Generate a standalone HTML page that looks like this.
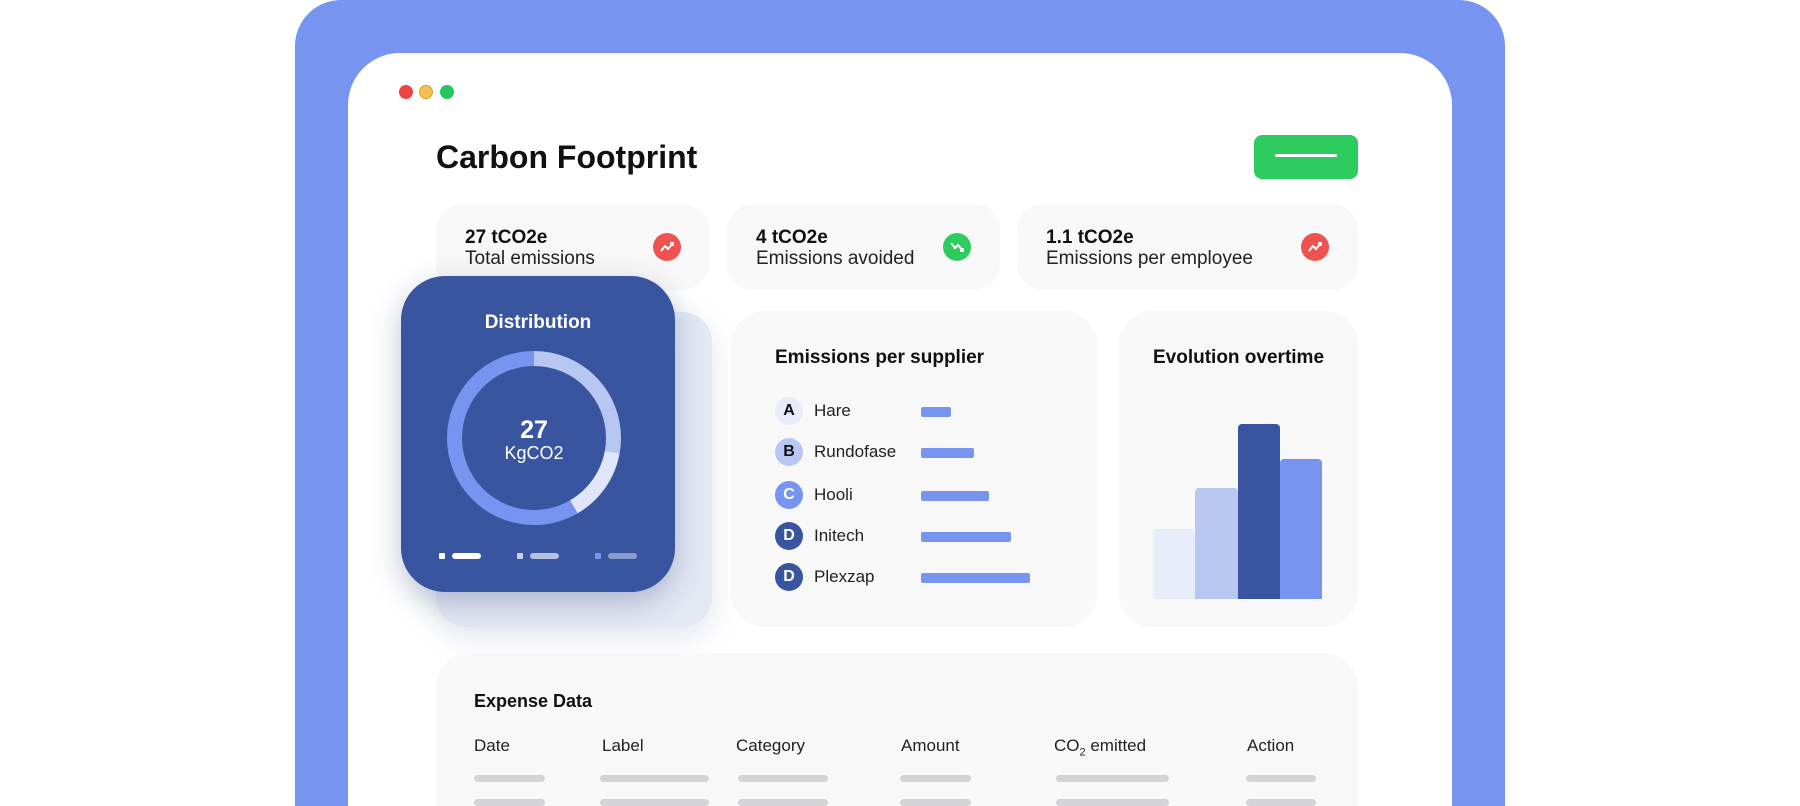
<!DOCTYPE html>
<html><head><meta charset="utf-8"><style>
*{margin:0;padding:0;box-sizing:border-box}
html,body{width:1800px;height:806px;overflow:hidden}
body{background:#fff;font-family:"Liberation Sans",sans-serif;color:#111}
#w{position:relative;width:1800px;height:806px;overflow:hidden}
.a{position:absolute}
.card{position:absolute;background:#f8f8f8;border-radius:26px}
.v{font-weight:bold;font-size:19px}
.l{font-size:19px;color:#222}
.av{position:absolute;width:28px;height:28px;border-radius:50%;font-weight:bold;font-size:16px;text-align:center;line-height:28px}
.nm{position:absolute;font-size:17px;color:#222}
.bar{position:absolute;height:10px;background:#7795F0;border-radius:2px}
.h{position:absolute;font-size:17px;color:#222;top:736px}
.g{position:absolute;height:7px;background:#d4d4d6;border-radius:4px}
</style></head><body><div id="w">
<div class="a" style="left:295px;top:0;width:1210px;height:806px;background:#7795F0;border-radius:46px 46px 0 0"></div>
<div class="a" style="left:348px;top:53px;width:1104px;height:753px;background:#fff;border-radius:52px 52px 0 0"></div>
<div class="a" style="left:399px;top:85px;width:14px;height:14px;border-radius:50%;background:#ef4444"></div>
<div class="a" style="left:419px;top:85px;width:14px;height:14px;border-radius:50%;background:#f4c14f;border:1px solid #d9a030"></div>
<div class="a" style="left:440px;top:85px;width:14px;height:14px;border-radius:50%;background:#22c55e"></div>
<div class="a" style="left:436px;top:139px;font-size:32px;font-weight:bold">Carbon Footprint</div>
<div class="a" style="left:1254px;top:135px;width:104px;height:44px;background:#2ECC5F;border-radius:8px"></div>
<div class="a" style="left:1275px;top:154px;width:62px;height:3px;background:#fff;border-radius:2px"></div>

<div class="card" style="left:436px;top:204px;width:273px;height:86px"></div>
<div class="card" style="left:727px;top:204px;width:273px;height:86px"></div>
<div class="card" style="left:1017px;top:204px;width:341px;height:86px"></div>
<div class="a v" style="left:465px;top:227px">27 tCO2e</div><div class="a l" style="left:465px;top:248px">Total emissions</div>
<div class="a v" style="left:756px;top:227px">4 tCO2e</div><div class="a l" style="left:756px;top:248px">Emissions avoided</div>
<div class="a v" style="left:1046px;top:227px">1.1 tCO2e</div><div class="a l" style="left:1046px;top:248px">Emissions per employee</div>
<svg class="a" style="left:653px;top:233px" width="28" height="28"><circle cx="14" cy="14" r="14" fill="#f05252"/><path d="M8 18l4-5 3 3 5-6m-3 0h3v3" stroke="#fff" stroke-width="2" fill="none"/></svg>
<svg class="a" style="left:943px;top:233px" width="28" height="28"><circle cx="14" cy="14" r="14" fill="#2ECC5F"/><path d="M8 10l4 5 3-3 5 6m-3 0h3v-3" stroke="#fff" stroke-width="2" fill="none"/></svg>
<svg class="a" style="left:1301px;top:233px" width="28" height="28"><circle cx="14" cy="14" r="14" fill="#f05252"/><path d="M8 18l4-5 3 3 5-6m-3 0h3v3" stroke="#fff" stroke-width="2" fill="none"/></svg>

<div class="a" style="left:436px;top:312px;width:276px;height:315px;background:#e4e8f3;border-radius:30px;box-shadow:0 10px 30px rgba(60,80,140,.15)"></div>
<div class="a" style="left:401px;top:276px;width:274px;height:316px;background:#3A55A0;border-radius:44px;box-shadow:0 10px 30px rgba(40,60,120,.3)"></div>
<div class="a" style="left:401px;top:312px;width:274px;text-align:center;color:#fff;font-weight:bold;font-size:19px">Distribution</div>
<svg class="a" style="left:446px;top:350px" width="176" height="176"><g transform="rotate(-90 88 88)">
<circle cx="88" cy="88" r="79.5" fill="none" stroke="#B8C7F2" stroke-width="15" stroke-dasharray="139 500"/>
<circle cx="88" cy="88" r="79.5" fill="none" stroke="#E0E6F9" stroke-width="15" stroke-dasharray="69 500" stroke-dashoffset="-139"/>
<circle cx="88" cy="88" r="79.5" fill="none" stroke="#7795F0" stroke-width="15" stroke-dasharray="292 500" stroke-dashoffset="-208"/></g></svg>
<div class="a" style="left:434px;top:416px;width:200px;text-align:center;color:#fff;font-weight:bold;font-size:25px">27</div>
<div class="a" style="left:434px;top:443px;width:200px;text-align:center;color:#fff;font-size:18px">KgCO2</div>
<div class="a" style="left:439px;top:553px;width:6px;height:6px;background:#fff;border-radius:1px"></div>
<div class="a" style="left:452px;top:553px;width:29px;height:6px;background:#fff;border-radius:3px"></div>
<div class="a" style="left:517px;top:553px;width:6px;height:6px;background:#c8d2ee;border-radius:1px"></div>
<div class="a" style="left:530px;top:553px;width:29px;height:6px;background:#b6c1e0;border-radius:3px"></div>
<div class="a" style="left:595px;top:553px;width:6px;height:6px;background:#7795F0;border-radius:1px"></div>
<div class="a" style="left:608px;top:553px;width:29px;height:6px;background:#8a9ccc;border-radius:3px"></div>

<div class="card" style="left:731px;top:311px;width:366px;height:316px;border-radius:34px"></div>
<div class="a" style="left:775px;top:347px;font-weight:bold;font-size:19px">Emissions per supplier</div>
<div class="av" style="left:775px;top:397px;background:#E8ECF9;color:#111">A</div><div class="nm" style="left:814px;top:401px">Hare</div><div class="bar" style="left:921px;top:407px;width:30px"></div>
<div class="av" style="left:775px;top:438px;background:#B8C7F2;color:#111">B</div><div class="nm" style="left:814px;top:442px">Rundofase</div><div class="bar" style="left:921px;top:448px;width:53px"></div>
<div class="av" style="left:775px;top:481px;background:#7795F0;color:#fff">C</div><div class="nm" style="left:814px;top:485px">Hooli</div><div class="bar" style="left:921px;top:491px;width:68px"></div>
<div class="av" style="left:775px;top:522px;background:#3A55A0;color:#fff">D</div><div class="nm" style="left:814px;top:526px">Initech</div><div class="bar" style="left:921px;top:532px;width:90px"></div>
<div class="av" style="left:775px;top:563px;background:#3A55A0;color:#fff">D</div><div class="nm" style="left:814px;top:567px">Plexzap</div><div class="bar" style="left:921px;top:573px;width:109px"></div>

<div class="card" style="left:1119px;top:311px;width:239px;height:316px;border-radius:34px"></div>
<div class="a" style="left:1119px;top:347px;width:239px;text-align:center;font-weight:bold;font-size:19px">Evolution overtime</div>
<div class="a" style="left:1153px;top:529px;width:42px;height:70px;background:#E8ECF9;border-radius:4px 4px 0 0"></div>
<div class="a" style="left:1195px;top:488px;width:43px;height:111px;background:#B8C7F2;border-radius:4px 4px 0 0"></div>
<div class="a" style="left:1238px;top:424px;width:42px;height:175px;background:#3A55A0;border-radius:4px 4px 0 0"></div>
<div class="a" style="left:1280px;top:459px;width:42px;height:140px;background:#7795F0;border-radius:4px 4px 0 0"></div>

<div class="card" style="left:436px;top:653px;width:922px;height:153px;border-radius:34px 34px 0 0"></div>
<div class="a" style="left:474px;top:691px;font-weight:bold;font-size:18px">Expense Data</div>
<div class="h" style="left:474px">Date</div><div class="h" style="left:602px">Label</div><div class="h" style="left:736px">Category</div><div class="h" style="left:901px">Amount</div><div class="h" style="left:1054px">CO<sub style="font-size:11px;line-height:0">2</sub> emitted</div><div class="h" style="left:1247px">Action</div>
<div class="g" style="left:474px;top:775px;width:71px"></div><div class="g" style="left:600px;top:775px;width:109px"></div><div class="g" style="left:738px;top:775px;width:90px"></div><div class="g" style="left:900px;top:775px;width:71px"></div><div class="g" style="left:1056px;top:775px;width:113px"></div><div class="g" style="left:1246px;top:775px;width:70px"></div>
<div class="g" style="left:474px;top:799px;width:71px"></div><div class="g" style="left:600px;top:799px;width:109px"></div><div class="g" style="left:738px;top:799px;width:90px"></div><div class="g" style="left:900px;top:799px;width:71px"></div><div class="g" style="left:1056px;top:799px;width:113px"></div><div class="g" style="left:1246px;top:799px;width:70px"></div>
</div></body></html>
